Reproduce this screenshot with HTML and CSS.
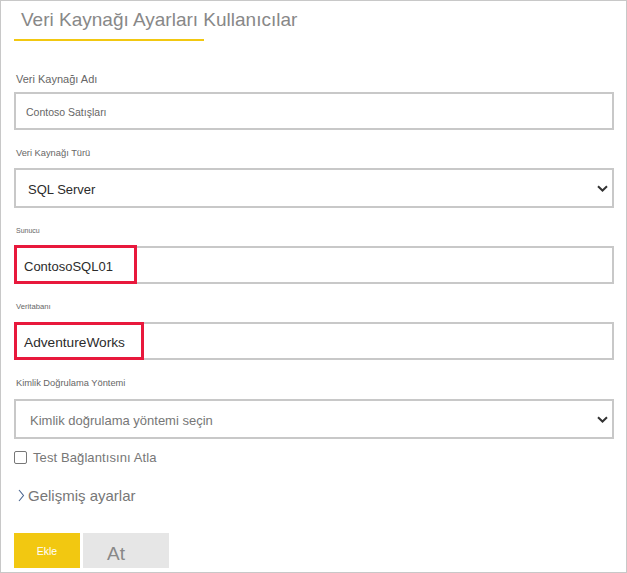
FILE: index.html
```html
<!DOCTYPE html>
<html lang="tr">
<head>
<meta charset="utf-8">
<title>Veri Kaynağı Ayarları Kullanıcılar</title>
<link rel="stylesheet" href="styles.css">
</head>
<body>
<div class="panel">
  <div class="title">Veri Kaynağı Ayarları Kullanıcılar</div>
  <div class="title-rule"></div>

  <div class="field field--first">
    <div class="label label--md">Veri Kaynağı Adı</div>
    <div class="box box--input pad-10"><span class="value value--muted value--sm">Contoso Satışları</span></div>
  </div>

  <div class="field">
    <div class="label label--sm">Veri Kaynağı Türü</div>
    <div class="box box--select pad-12">
      <span class="value value--dark">SQL Server</span>
      <svg class="caret" width="11" height="7" viewBox="0 0 11 7"><path d="M1 1.2 L5.5 5.5 L10 1.2" fill="none" stroke="#333" stroke-width="2"/></svg>
    </div>
  </div>

  <div class="field">
    <div class="label label--xs">Sunucu</div>
    <div class="box box--input pad-8">
      <span class="value value--dark">ContosoSQL01</span>
      <span class="highlight highlight--server"></span>
    </div>
  </div>

  <div class="field">
    <div class="label label--xs2">Veritabanı</div>
    <div class="box box--input pad-8">
      <span class="value value--dark value--lg">AdventureWorks</span>
      <span class="highlight highlight--db"></span>
    </div>
  </div>

  <div class="field field--auth">
    <div class="label label--sm">Kimlik Doğrulama Yöntemi</div>
    <div class="box box--select pad-14">
      <span class="value value--grey">Kimlik doğrulama yöntemi seçin</span>
      <svg class="caret" width="11" height="7" viewBox="0 0 11 7"><path d="M1 1.2 L5.5 5.5 L10 1.2" fill="none" stroke="#333" stroke-width="2"/></svg>
    </div>
  </div>

  <label class="check-row">
    <span class="checkbox"></span>
    <span class="check-text">Test Bağlantısını Atla</span>
  </label>

  <div class="advanced">
    <svg class="adv-chevron" width="7" height="13" viewBox="0 0 7 13"><path d="M1 1 L5.5 6.5 L1 12" fill="none" stroke="#4a6590" stroke-width="1.1"/></svg>
    <span class="adv-text">Gelişmiş ayarlar</span>
  </div>

  <div class="actions">
    <button class="btn btn--primary">Ekle</button>
    <button class="btn btn--secondary">At</button>
  </div>
</div>
</body>
</html>
```

FILE: styles.css
```css
* { box-sizing: border-box; }

html, body {
  margin: 0;
  padding: 0;
  background: #ffffff;
}

body {
  font-family: "Liberation Sans", Arial, sans-serif;
  width: 627px;
  height: 573px;
  overflow: hidden;
}

.panel {
  width: 627px;
  height: 573px;
  border: 1px solid #c8c8c8;
  padding: 0 12px 0 13px;
  display: flex;
  flex-direction: column;
}

.title {
  font-size: 19px;
  line-height: 22px;
  padding: 8px 0 8px 7px;
  color: #888888;
  white-space: nowrap;
}

.title-rule {
  width: 190px;
  height: 2px;
  background: #f2c811;
}

.field {
  display: flex;
  flex-direction: column;
}

.label {
  padding: 15px 0 0 2px;
  line-height: 16px;
  margin-bottom: 7px;
  color: #666666;
  white-space: nowrap;
}

.field--first .label {
  padding-top: 30px;
  margin-bottom: 5px;
}

.field--auth .label {
  margin-bottom: 8px;
}

.label--md { font-size: 11px; }
.label--sm { font-size: 9.3px; }
.label--xs { font-size: 7px; }
.label--xs2 { font-size: 7.7px; }

.box {
  position: relative;
  width: 600px;
  border: 2px solid #c8c8c8;
  background: #ffffff;
  display: flex;
  align-items: center;
  justify-content: space-between;
  padding-top: 2px;
  padding-right: 4px;
}

.box--input { height: 38px; }
.box--select { height: 40px; }

.pad-8 { padding-left: 8px; }
.pad-10 { padding-left: 10px; }
.pad-12 { padding-left: 12px; }
.pad-14 { padding-left: 14px; }

.value {
  font-size: 13px;
  white-space: nowrap;
}

.value--sm { font-size: 10.5px; }
.value--lg { font-size: 13.7px; }
.value--muted { color: #666666; }
.value--dark { color: #2b2b2b; }
.value--grey { color: #777777; }

.caret {
  display: block;
  margin-top: -2px;
}

.highlight {
  position: absolute;
  left: -2px;
  top: -2px;
  bottom: -2px;
  border: 3px solid #e8183c;
  pointer-events: none;
}

.highlight--server { width: 123px; top: -3px; bottom: -2px; }
.highlight--db { width: 130px; }

.check-row {
  display: flex;
  align-items: center;
  margin-top: 12px;
  height: 13px;
}

.checkbox {
  width: 13px;
  height: 13px;
  border: 1px solid #777777;
  border-radius: 2px;
  background: #ffffff;
  flex: none;
}

.check-text {
  margin-left: 6px;
  font-size: 13px;
  line-height: 13px;
  color: #777777;
  letter-spacing: 0.1px;
}

.advanced {
  display: flex;
  align-items: center;
  margin-top: 23px;
  height: 18px;
  padding-left: 4px;
}

.adv-chevron {
  display: block;
  margin-top: -2px;
}

.adv-text {
  margin-left: 3px;
  font-size: 15px;
  line-height: 18px;
  color: #777777;
}

.actions {
  display: flex;
  gap: 3px;
  margin-top: 28px;
}

.btn {
  height: 35px;
  border: none;
  margin: 0;
  font-family: "Liberation Sans", Arial, sans-serif;
  cursor: pointer;
}

.btn--primary {
  width: 66px;
  background: #f2c811;
  color: #ffffff;
  font-size: 10.5px;
  padding: 1px 0 0 0;
}

.btn--secondary {
  width: 86px;
  background: #e6e6e6;
  color: #888888;
  font-size: 19px;
  text-align: left;
  padding: 6px 0 0 24px;
}
```
